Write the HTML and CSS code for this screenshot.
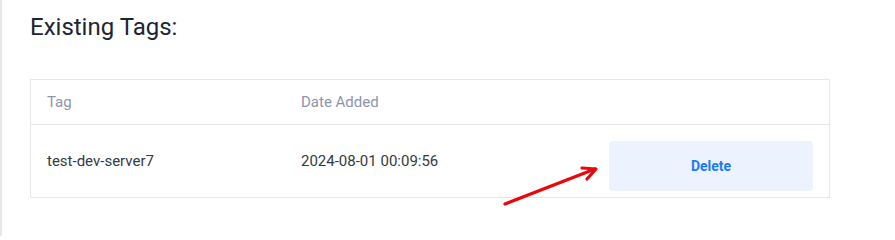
FILE: index.html
```html
<!DOCTYPE html>
<html>
<head>
<meta charset="utf-8">
<link rel="stylesheet" href="styles.css">
</head>
<body>
<div class="page">
  <h2 class="title">Existing Tags:</h2>
  <div class="table">
    <div class="row head">
      <div class="cell">Tag</div>
      <div class="cell">Date Added</div>
      <div class="cell"></div>
    </div>
    <div class="row body">
      <div class="cell">test-dev-server7</div>
      <div class="cell">2024-08-01 00:09:56</div>
      <div class="cell action"><button class="btn-delete">Delete</button></div>
    </div>
  </div>
  <svg class="arrow" width="895" height="236" viewBox="0 0 895 236">
    <g stroke="#e8070b" stroke-width="3.2" stroke-linecap="round" stroke-linejoin="round" fill="none">
      <line x1="505" y1="204" x2="595" y2="169"/>
      <polyline points="582,168 596,169 587,179"/>
    </g>
  </svg>
</div>
</body>
</html>
```
FILE: styles.css
```css
html, body {
  margin: 0;
  padding: 0;
  background: #fff;
}
body {
  font-family: Roboto, "Noto Sans", sans-serif;
}
.page {
  position: relative;
  width: 895px;
  height: 236px;
  box-sizing: border-box;
  border-left: 2px solid #e6e7eb;
  padding: 11px 0 0 28px;
}
.title {
  margin: 0;
  font-size: 24px;
  font-weight: 400;
  line-height: 32px;
  color: #1d2533;
}
.table {
  margin-top: 36px;
  width: 800px;
  box-sizing: border-box;
  border: 1px solid #e5e6ea;
}
.row {
  display: grid;
  grid-template-columns: 254px 308px 236px;
  align-items: center;
}
.row.head {
  height: 44px;
  border-bottom: 1px solid #e5e6ea;
  color: #8a95ad;
  font-size: 15px;
}
.row.body {
  height: 72px;
  color: #333a45;
  font-size: 15px;
}
.cell {
  padding: 0 16px;
}
.action {
  align-self: start;
  padding-top: 16px;
}
.btn-delete {
  display: block;
  width: 204px;
  height: 50px;
  border: none;
  border-radius: 4px;
  background: #ecf3fe;
  color: #1a7bf5;
  font-family: Roboto, sans-serif;
  font-weight: 700;
  font-size: 14px;
  padding: 0;
}
.arrow {
  position: absolute;
  left: -2px;
  top: 0;
  pointer-events: none;
}
```
